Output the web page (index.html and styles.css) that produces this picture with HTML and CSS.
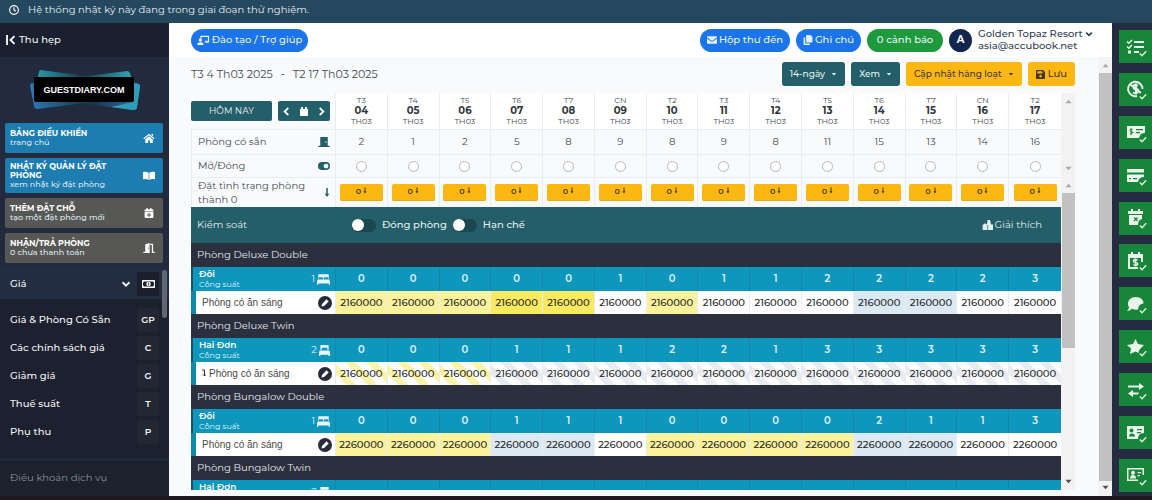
FILE: index.html
```html
<!DOCTYPE html>
<html lang="vi">
<head>
<meta charset="utf-8">
<title>GuestDiary – Nhật ký quản lý đặt phòng</title>
<link rel="stylesheet" href="styles.css">
</head>
<body>
<svg class="sprite" aria-hidden="true">
  <symbol id="caret" viewBox="0 0 8 8"><path d="M1 2.500h6L4 6z"/></symbol>
  <symbol id="up" viewBox="0 0 8 8"><path d="M0.500 6h7L4 2z"/></symbol>
  <symbol id="down" viewBox="0 0 8 8"><path d="M0.500 2h7L4 6z"/></symbol>
  <symbol id="chev" viewBox="0 0 10 10"><path d="M1.500 3.200 5 6.700l3.500-3.500" fill="none" stroke="currentColor" stroke-width="2"/></symbol>
  <symbol id="left" viewBox="0 0 10 10"><path d="M7 1 3 5l4 4" fill="none" stroke="currentColor" stroke-width="2"/></symbol>
  <symbol id="right" viewBox="0 0 10 10"><path d="M3 1l4 4-4 4" fill="none" stroke="currentColor" stroke-width="2"/></symbol>
  <symbol id="cal" viewBox="0 0 16 16"><path d="M2 3h1V0h3v3h4V0h3v3h1a1 1 0 0 1 1 1v11a1 1 0 0 1-1 1H2a1 1 0 0 1-1-1V4a1 1 0 0 1 1-1z"/></symbol>
  <symbol id="calplus" viewBox="0 0 16 16"><path fill-rule="evenodd" d="M2.500 2H4V0h2v2h4V0h2v2h1.500A1.500 1.500 0 0 1 15 3.500V5H1V3.500A1.500 1.500 0 0 1 2.500 2zM1 6h14v8.500a1.500 1.500 0 0 1-1.500 1.500h-11A1.500 1.500 0 0 1 1 14.500zm6.200 1.500v2.700H4.500v1.600h2.700v2.700h1.600v-2.700h2.700v-1.600H8.800V7.500z"/></symbol>
  <symbol id="bed" viewBox="0 0 20 16"><path fill-rule="evenodd" d="M2 0h16v7h-1V4.500h-6V7H9V4.500H3V7H2zM1 8h18l1 3v5h-2v-2H2v2H0v-5z"/></symbol>
  <symbol id="bed1" viewBox="0 0 16 16"><path fill-rule="evenodd" d="M2 0h12v7h-2V4H4v3H2zM1 8h14l1 3v5h-2v-2H2v2H0v-5z"/></symbol>
  <symbol id="pen" viewBox="0 0 16 16"><circle cx="8" cy="8" r="8" fill="#272b3a"/><path d="M4 12l.6-3L9.800 3.800l2.400 2.400L7 11.400z" fill="#fff"/></symbol>
  <symbol id="arrow" viewBox="0 0 8 12"><path d="M3 0h2v7.500h2L4 12 1 7.500h2z"/></symbol>
  <symbol id="check" viewBox="0 0 10 8"><path d="M1 4l2.800 2.800L9 1.200" fill="none" stroke="#d9f0dc" stroke-width="1.800"/></symbol>
</svg>

<div class="banner">
  <svg width="10" height="10" viewBox="0 0 16 16"><circle cx="8" cy="8" r="7" fill="none" stroke="#fff" stroke-width="1.800"/><path d="M8 3.500V8l3 2" fill="none" stroke="#fff" stroke-width="1.800"/></svg>
  <span>Hệ thống nhật ký này đang trong giai đoạn thử nghiệm.</span>
</div>

<div class="app">
  <aside class="side">
    <button class="collapse"><svg width="10" height="10" viewBox="0 0 10 10"><path d="M1 0v10M8.500 1.200 4.500 5l4 3.800" fill="none" stroke="#fff" stroke-width="1.800"/></svg>Thu hẹp</button>
    <div class="logo">
      <svg viewBox="0 0 112 42" width="112" height="42">
        <defs>
          <linearGradient id="g1"><stop offset="0" stop-color="#299aa8"/><stop offset=".5" stop-color="#17304a"/><stop offset="1" stop-color="#2b6fa8"/></linearGradient>
          <linearGradient id="g2"><stop offset="0" stop-color="#2c78b4"/><stop offset=".5" stop-color="#17404f"/><stop offset="1" stop-color="#31a4b4"/></linearGradient>
        </defs>
        <path d="M12 1q-2 0-2 2L7 15l3 14 94 12q4 0 4-3l3-20q1-3-3-4z" fill="url(#g1)"/>
        <path d="M98 2q2 0 3 2l3 10-1 14-94 12q-4 0-4-3L1 17q0-3 3-3z" fill="url(#g2)"/>
        <path d="M104 14l4 1q3 0 3 3l-3 20q0 3-4 3l-22-3 22-5z" fill="#2f9db6"/>
        <rect x="5" y="8" width="100" height="25" rx="2" fill="#000"/>
        <text x="55" y="24" text-anchor="middle" class="logo-text">GUESTDIARY.COM</text>
      </svg>
    </div>
    <nav class="tiles">
      <a class="tile blue" href="#"><span><b>BẢNG ĐIỀU KHIỂN</b>trang chủ</span><svg width="12" height="10" viewBox="0 0 18 16"><path d="M9 1l9 7.500-1.200 1.300L9 3.400 1.200 9.800 0 8.500zM13 1.500h2.500V5L13 3zM9 5l6 5v6h-4.500v-4h-3v4H3v-6z"/></svg></a>
      <a class="tile blue" href="#"><span><b>NHẬT KÝ QUẢN LÝ ĐẶT PHÒNG</b>xem nhật ký đặt phòng</span><svg width="12" height="10" viewBox="0 0 18 14"><path d="M0 1q5-1 8.500 1v11Q5 11 0 12zM18 1q-5-1-8.500 1v11q3.500-2 8.500-1z"/></svg></a>
      <a class="tile grey" href="#"><span><b>THÊM ĐẶT CHỖ</b>tạo một đặt phòng mới</span><svg width="12" height="10"><use href="#calplus"/></svg></a>
      <a class="tile grey" href="#"><span><b>NHẬN/TRẢ PHÒNG</b>0 chưa thanh toán</span><svg width="12" height="10" viewBox="0 0 18 16"><path fill-rule="evenodd" d="M3 2l7-2v16H0v-2h3zm4.500 5v2h1.200V7zM11 1h4.500v13H18v2h-4.500V3H11z"/></svg></a>
    </nav>
    <div class="menu">
      <button class="menu-head"><span>Giá</span><svg width="10" height="10"><use href="#chev"/></svg><i><svg width="13" height="8" viewBox="0 0 26 16"><path fill-rule="evenodd" d="M0 0h26v16H0zM4 3q0 2-2 2v6q2 0 2 2h18q0-2 2-2V5q-2 0-2-2z"/><circle cx="13" cy="8" r="4.500"/><path d="M13 5v6" stroke="#1b1e2b" stroke-width="1.500"/></svg></i></button>
      <ul>
        <li><a href="#">Giá &amp; Phòng Có Sẵn</a><i>GP</i></li>
        <li><a href="#">Các chính sách giá</a><i>C</i></li>
        <li><a href="#">Giảm giá</a><i>G</i></li>
        <li><a href="#">Thuế suất</a><i>T</i></li>
        <li><a href="#">Phụ thu</a><i>P</i></li>
      </ul>
      <div class="side-thumb"></div>
    </div>
    <a class="terms" href="#">Điều khoản dịch vụ</a>
  </aside>

  <main class="main">
    <header class="top">
      <button class="pill help"><svg width="13" height="10" viewBox="0 0 20 16"><path d="M5 1h14v11h-7v-2h5V3H7v2H5z"/><circle cx="5" cy="8" r="2.700"/><path d="M0 16q0-4.500 4-4.500h2q4 0 4 4.500zM12 9h4v4z"/></svg>Đào tạo / Trợ giúp</button>
      <span class="grow"></span>
      <button class="pill inbox"><svg width="10" height="8" viewBox="0 0 16 12"><path d="M0 1q0-1 1-1h14q1 0 1 1v1L8 7.500 0 2zM0 4l8 5.200L16 4v7q0 1-1 1H1q-1 0-1-1z"/></svg>Hộp thư đến</button>
      <button class="pill notes"><svg width="10" height="10" viewBox="0 0 16 16"><path d="M6 0h6l3 3v9H5V1q0-1 1-1zM1 4h2.500v9.500H11V16H2q-1 0-1-1z"/></svg>Ghi chú</button>
      <button class="pill alerts">0 cảnh báo</button>
      <span class="avatar">A</span>
      <button class="user"><span>Golden Topaz Resort<br>asia@accubook.net</span><svg width="8" height="8"><use href="#chev"/></svg></button>
    </header>

    <div class="content">
      <div class="page">
        <div class="toolbar">
          <span class="range">T3 4 Th03 2025</span><span class="range">-</span><span class="range">T2 17 Th03 2025</span>
          <span class="grow"></span>
          <button class="btn teal">14-ngày <svg width="6" height="6"><use href="#caret"/></svg></button>
          <button class="btn teal">Xem <svg width="6" height="6"><use href="#caret"/></svg></button>
          <button class="btn amber">Cập nhật hàng loạt <svg width="6" height="6"><use href="#caret"/></svg></button>
          <button class="btn amber save"><svg width="9" height="9" viewBox="0 0 14 14"><path fill-rule="evenodd" d="M1 0h10l3 3v10q0 1-1 1H1q-1 0-1-1V1q0-1 1-1zm1 2v3.500h8V2zm5 5.500a2 2 0 1 0 .01 0z"/></svg>Lưu</button>
        </div>

        <div class="pane head-pane">
          <table class="grid">
            <colgroup><col class="label-col"><col span="14"></colgroup>
            <tr class="dates">
              <td><div class="nav"><button class="today">HÔM NAY</button><span class="pager"><button aria-label="Trước"><svg width="9" height="9"><use href="#left"/></svg></button><button aria-label="Lịch"><svg width="10" height="9"><use href="#cal"/></svg></button><button aria-label="Sau"><svg width="9" height="9"><use href="#right"/></svg></button></span></div></td>
              <th>T3<b>04</b>TH03</th><th>T4<b>05</b>TH03</th><th>T5<b>06</b>TH03</th><th>T6<b>07</b>TH03</th><th>T7<b>08</b>TH03</th><th>CN<b>09</b>TH03</th><th>T2<b>10</b>TH03</th><th>T3<b>11</b>TH03</th><th>T4<b>12</b>TH03</th><th>T5<b>13</b>TH03</th><th>T6<b>14</b>TH03</th><th>T7<b>15</b>TH03</th><th>CN<b>16</b>TH03</th><th>T2<b>17</b>TH03</th>
            </tr>
            <tr class="avail">
              <th><div class="lab">Phòng có sẵn<svg width="12" height="10" viewBox="0 0 18 16"><path fill-rule="evenodd" d="M3 0h12v14h3v2H0v-2h3zm8 7v2h2V7z"/></svg></div></th>
              <td>2</td><td>1</td><td>2</td><td>5</td><td>8</td><td>9</td><td>8</td><td>9</td><td>8</td><td>11</td><td>15</td><td>13</td><td>14</td><td>16</td>
            </tr>
            <tr class="open">
              <th><div class="lab">Mở/Đóng<svg width="12" height="8" viewBox="0 0 18 12"><path fill-rule="evenodd" d="M6 0h6a6 6 0 0 1 0 12H6A6 6 0 0 1 6 0zm6 2.500a3.500 3.500 0 1 0 .01 0z"/></svg></div></th>
              <td><input type="radio" aria-label="04"></td><td><input type="radio" aria-label="05"></td><td><input type="radio" aria-label="06"></td><td><input type="radio" aria-label="07"></td><td><input type="radio" aria-label="08"></td><td><input type="radio" aria-label="09"></td><td><input type="radio" aria-label="10"></td><td><input type="radio" aria-label="11"></td><td><input type="radio" aria-label="12"></td><td><input type="radio" aria-label="13"></td><td><input type="radio" aria-label="14"></td><td><input type="radio" aria-label="15"></td><td><input type="radio" aria-label="16"></td><td><input type="radio" aria-label="17"></td>
            </tr>
          </table>
          <div class="scroll"><svg width="7" height="7"><use href="#up"/></svg><svg width="7" height="7"><use href="#down"/></svg></div>
        </div>

        <div class="pane body-pane">
          <div class="rows">
          <table class="grid">
            <colgroup><col class="label-col"><col span="14"></colgroup>
            <tr class="zero">
              <th><div class="lab">Đặt tình trạng phòng thành 0<svg width="6" height="9"><use href="#arrow"/></svg></div></th>
              <td><button>0<svg width="4" height="7"><use href="#arrow"/></svg></button></td><td><button>0<svg width="4" height="7"><use href="#arrow"/></svg></button></td><td><button>0<svg width="4" height="7"><use href="#arrow"/></svg></button></td><td><button>0<svg width="4" height="7"><use href="#arrow"/></svg></button></td><td><button>0<svg width="4" height="7"><use href="#arrow"/></svg></button></td><td><button>0<svg width="4" height="7"><use href="#arrow"/></svg></button></td><td><button>0<svg width="4" height="7"><use href="#arrow"/></svg></button></td><td><button>0<svg width="4" height="7"><use href="#arrow"/></svg></button></td><td><button>0<svg width="4" height="7"><use href="#arrow"/></svg></button></td><td><button>0<svg width="4" height="7"><use href="#arrow"/></svg></button></td><td><button>0<svg width="4" height="7"><use href="#arrow"/></svg></button></td><td><button>0<svg width="4" height="7"><use href="#arrow"/></svg></button></td><td><button>0<svg width="4" height="7"><use href="#arrow"/></svg></button></td><td><button>0<svg width="4" height="7"><use href="#arrow"/></svg></button></td>
            </tr>
            <tr class="control">
              <th><div class="lab">Kiểm soát</div></th>
              <td colspan="14"><div class="switches">
                <label><input type="checkbox">Đóng phòng</label><label><input type="checkbox">Hạn chế</label>
                <span class="grow"></span>
                <button class="legend"><svg width="11" height="10" viewBox="0 0 18 16"><path d="M9 0h4l2 7h3v9h-8V8H8zM1 8l4-3 4 3v8H1z"/></svg>Giải thích</button>
              </div></td>
            </tr>
            <tr class="room"><th colspan="15">Phòng Deluxe Double</th></tr>
            <tr class="cap">
              <th><div class="lab"><span><b>Đôi</b>Công suất</span><em>1<svg width="13" height="11"><use href="#bed"/></svg></em></div></th>
              <td>0</td><td>0</td><td>0</td><td>0</td><td>0</td><td>1</td><td>0</td><td>1</td><td>1</td><td>2</td><td>2</td><td>2</td><td>2</td><td>3</td>
            </tr>
            <tr class="price">
              <th><div class="lab">Phòng có ăn sáng<svg width="14" height="14"><use href="#pen"/></svg></div></th>
              <td class="y1">2160000</td><td class="y1">2160000</td><td class="y1">2160000</td><td class="y2">2160000</td><td class="y2">2160000</td><td>2160000</td><td class="y1">2160000</td><td>2160000</td><td>2160000</td><td>2160000</td><td class="b1">2160000</td><td class="b1">2160000</td><td>2160000</td><td>2160000</td>
            </tr>
            <tr class="room"><th colspan="15">Phòng Deluxe Twin</th></tr>
            <tr class="cap">
              <th><div class="lab"><span><b>Hai Đơn</b>Công suất</span><em>2<svg width="11" height="11"><use href="#bed1"/></svg></em></div></th>
              <td>0</td><td>0</td><td>0</td><td>1</td><td>1</td><td>1</td><td>2</td><td>2</td><td>1</td><td>3</td><td>3</td><td>3</td><td>3</td><td>3</td>
            </tr>
            <tr class="price">
              <th><div class="lab"><span><svg class="turn" width="4" height="8" viewBox="0 0 4 8"><path d="M0 1h2.500v6M1 5.500 2.500 7 4 5.500" fill="none" stroke="#333" stroke-width="1"/></svg>Phòng có ăn sáng</span><svg width="14" height="14"><use href="#pen"/></svg></div></th>
              <td class="ys">2160000</td><td class="ys">2160000</td><td class="ys">2160000</td><td class="bs">2160000</td><td class="bs">2160000</td><td class="bs">2160000</td><td class="bs">2160000</td><td class="bs">2160000</td><td class="bs">2160000</td><td class="bs">2160000</td><td class="bs">2160000</td><td class="bs">2160000</td><td class="bs">2160000</td><td class="bs">2160000</td>
            </tr>
            <tr class="room"><th colspan="15">Phòng Bungalow Double</th></tr>
            <tr class="cap">
              <th><div class="lab"><span><b>Đôi</b>Công suất</span><em>1<svg width="13" height="11"><use href="#bed"/></svg></em></div></th>
              <td>0</td><td>0</td><td>0</td><td>1</td><td>1</td><td>1</td><td>0</td><td>0</td><td>0</td><td>0</td><td>2</td><td>1</td><td>1</td><td>3</td>
            </tr>
            <tr class="price">
              <th><div class="lab">Phòng có ăn sáng<svg width="14" height="14"><use href="#pen"/></svg></div></th>
              <td class="y1">2260000</td><td class="y1">2260000</td><td class="y1">2260000</td><td class="b1">2260000</td><td class="b1">2260000</td><td>2260000</td><td class="y1">2260000</td><td class="y1">2260000</td><td class="y1">2260000</td><td class="y1">2260000</td><td class="b1">2260000</td><td class="b1">2260000</td><td>2260000</td><td>2260000</td>
            </tr>
            <tr class="room"><th colspan="15">Phòng Bungalow Twin</th></tr>
            <tr class="cap">
              <th><div class="lab"><span><b>Hai Đơn</b>Công suất</span><em>2<svg width="11" height="11"><use href="#bed1"/></svg></em></div></th>
              <td></td><td></td><td></td><td></td><td></td><td></td><td></td><td></td><td></td><td></td><td></td><td></td><td></td><td></td>
            </tr>
          </table>
          </div>
          <div class="scroll"><svg width="7" height="7"><use href="#up"/></svg><div class="thumb half"></div><svg class="dark" width="7" height="7"><use href="#down"/></svg></div>
        </div>
      </div>
      <div class="scroll outer"><svg width="7" height="7"><use href="#up"/></svg><div class="thumb most"></div><svg class="dark" width="7" height="7"><use href="#down"/></svg></div>
    </div>
  </main>

  <aside class="rail">
    <button aria-label="Danh sách"><svg viewBox="0 0 20 18"><path d="M8 3h10v2H8zM8 8h10v2H8zM8 13h5v2H8zM2 12.500h3v3H2z"/><path d="M1 3.500l1.800 1.800L6 2M1 8.500l1.800 1.800L6 7" fill="none" stroke="#e9f7ea" stroke-width="1.500"/></svg><svg class="tick"><use href="#check"/></svg></button>
    <button aria-label="Giá"><svg viewBox="0 0 20 18"><path d="M16.500 9A7.200 7.200 0 1 0 11 16M4 4l11 9M12 5.500q-4-2-4.500 1t3 2.500q3 1 1.500 3t-5 .5M10 3.500v11" fill="none" stroke="#e9f7ea" stroke-width="2"/></svg><svg class="tick"><use href="#check"/></svg></button>
    <button aria-label="Séc"><svg viewBox="0 0 20 18"><path fill-rule="evenodd" d="M1 3h18v7q-5 0-6 5H1zm9 3v1.300h7V6zm0 3v1.300h4V9z"/><path d="M6.500 6.500Q4 5.500 4 7.200T6.500 9 4 10.800M5.200 5v7" fill="none" stroke="#2a7d3a"/></svg><svg class="tick"><use href="#check"/></svg></button>
    <button aria-label="Thẻ"><svg viewBox="0 0 20 18"><path fill-rule="evenodd" d="M1 3h17v3.500H1zM1 8.500h17V11q-5 0-6 5H1zM3 12v1.300h2V12zm4 0v1.300h4V12z"/></svg><svg class="tick"><use href="#check"/></svg></button>
    <button aria-label="Hủy đặt"><svg viewBox="0 0 20 18"><path d="M2 2h3V0h2v2h5V0h2v2h3v3H2zM3 6h13v4q-4 1-4 6H3z"/><path d="M8 8.500l3.500 3.500M11.500 8.500 8 12" stroke="#2a7d3a" stroke-width="1.300"/></svg><svg class="tick"><use href="#check"/></svg></button>
    <button aria-label="Lịch giá"><svg viewBox="0 0 20 18"><path fill-rule="evenodd" d="M2 2h3V0h2v2h5V0h2v2h3v8h-2V6H4v9h8v2H2z"/><path d="M11.500 8Q8 6.500 7.500 8.500t2 2q3 .5 2 2t-4 .5M9.500 6.500v8" fill="none" stroke="#e9f7ea" stroke-width="1.400"/></svg><svg class="tick"><use href="#check"/></svg></button>
    <button aria-label="Tin nhắn"><svg viewBox="0 0 20 18"><path d="M10 2q7 0 7.500 6.500-5 .5-5.500 6-3 .5-6-.7Q4 16 1 16q2-2 2-4-1.500-2-1-4.500Q3.500 2 10 2z"/></svg><svg class="tick"><use href="#check"/></svg></button>
    <button aria-label="Đánh giá"><svg viewBox="0 0 20 18"><path d="M9.500 1l2.500 5 6 1-3.500 3.500q-2 1.500-2 4.500l-3-1.500L4 16l1-5.500L1 7l6-1z"/></svg><svg class="tick"><use href="#check"/></svg></button>
    <button aria-label="Chuyển"><svg viewBox="0 0 20 18"><path d="M2 4.500h11V2l5 3.500L13 9V6.500H2zM13 11.500H7V9l-5 3.500L7 16v-2.500h5z"/></svg><svg class="tick"><use href="#check"/></svg></button>
    <button aria-label="Khách"><svg viewBox="0 0 20 18"><path fill-rule="evenodd" d="M1 2h17v7q-6 0-6 6H1zm4.500 2.500a2 2 0 1 0 .01 0zM3 12.500h6q0-3-3-3t-3 3zM11 5v1.300h5V5zm0 3v1.300h4V8z"/></svg><svg class="tick"><use href="#check"/></svg></button>
    <button aria-label="Danh bạ"><svg viewBox="0 0 20 18"><path fill-rule="evenodd" d="M1 2h17v7h-1.500V3.500h-14v10H12V15H1z"/><circle cx="7" cy="6.700" r="2"/><path d="M4 12.500q0-3.500 3-3.500t3 3.500zM11.500 6H15v1.300h-3.500zM11.500 9H14v1.300h-2.500z"/></svg><svg class="tick"><use href="#check"/></svg></button>
  </aside>
</div>
</body>
</html>
```
FILE: styles.css
```css
* { box-sizing: border-box; }
body {
  margin: 0; height: 100vh; overflow: hidden;
  display: flex; flex-direction: column;
  border-bottom: 4px solid #1c1a1c;
  background: #252c42;
  font: 500 10px/14px Montserrat, Inter, "Noto Sans", sans-serif;
  color: #454b55;
}
button { font: inherit; color: inherit; border: 0; background: none; padding: 0; margin: 0; cursor: pointer; }
a { color: inherit; text-decoration: none; }
svg { fill: currentColor; flex: none; display: block; }
em, i { font-style: normal; }
input { margin: 0; }
.sprite { position: absolute; width: 0; height: 0; }
.grow { flex: 1; }

.banner { flex: none; height: 23px; padding: 0 9px 3px; display: flex; align-items: center; gap: 9px; background: #24495f; color: #e6edf2; font-weight: 400; }
.app { flex: 1; min-height: 0; display: flex; }

/* sidebar */
.side { flex: none; width: 169px; background: #222a3d; color: #f1f3f6; display: flex; flex-direction: column; }
.collapse { height: 34px; flex: none; padding: 0 6px; display: flex; align-items: center; gap: 3px; background: #1a202e; }
.logo { flex: none; height: 66px; padding-top: 12px; display: flex; justify-content: center; }
.logo-text { font: bold 9px "Liberation Sans", Arial, sans-serif; fill: #fff; }
.tiles { flex: none; padding: 0 6px 5px 5px; display: flex; flex-direction: column; gap: 5px; }
.tile { min-height: 30px; padding: 1px 8px 1px 5px; display: flex; align-items: center; justify-content: space-between; border-radius: 2px; font-size: 8px; line-height: 9px; color: #dde9f0; }
.tile span { width: 112px; }
.tile:nth-child(2) { min-height: 35px; }
.tile b { display: block; color: #fff; font-weight: 700; }
.tile svg { color: #fff; }
.blue { background: #1d7cb0; }
.grey { background: #575856; }
.menu { flex: 1; min-height: 0; background: #1d202e; position: relative; }
.menu-head { width: 100%; height: 31px; padding: 0 10px; display: flex; align-items: center; background: #222d41; text-align: left; }
.menu-head span { flex: 1; }
.menu i { width: 22px; height: 24px; margin-left: 6px; display: flex; align-items: center; justify-content: center; background: #1b1e2b; border-radius: 3px; font-size: 9px; font-weight: 600; }
.menu ul { list-style: none; margin: 0; padding: 7px 10px 0; }
.menu li { height: 28px; display: flex; align-items: center; justify-content: space-between; }
.menu li i { background: #232633; }
.side-thumb { position: absolute; right: 2px; top: 2px; width: 5px; height: 48px; border-radius: 3px; background: #626673; }
.terms { flex: none; height: 38px; padding: 0 10px 2px; border-top: 3px solid #20283c; display: flex; align-items: center; background: #1b212d; color: #8a8f99; font-weight: 400; }

/* header */
.main { flex: 1; min-width: 0; display: flex; flex-direction: column; background: #f9fafc; }
.top { flex: none; height: 34px; padding: 0 20px 0 22px; display: flex; align-items: center; gap: 6px; background: #fff; }
.pill { height: 23px; border-radius: 12px; display: flex; align-items: center; justify-content: center; gap: 2px; color: #e9f3ff; background: #1b74ea; }
.help { width: 117px; }
.inbox { width: 90px; }
.notes { width: 65px; }
.alerts { width: 76px; background: #1e9a3d; }
.avatar { width: 23px; height: 23px; border-radius: 50%; background: #10264d; color: #fff; font-weight: 700; display: flex; align-items: center; justify-content: center; }
.user { display: flex; gap: 2px; text-align: left; line-height: 12px; color: #303c52; width: 114px; white-space: nowrap; }
.user svg { margin-top: 2px; }

.content { flex: 1; min-height: 0; display: flex; }
.page { flex: 1; min-width: 0; padding: 5px 23px 6px 22px; display: flex; flex-direction: column; }
.toolbar { flex: none; display: flex; align-items: center; gap: 6px; margin-bottom: 7px; }
.range { margin-right: 2px; font-size: 11px; font-weight: 400; }
.btn { height: 24px; padding: 0 8px; border-radius: 3px; display: flex; align-items: center; gap: 6px; font-size: 9px; }
.teal { background: #245e68; color: #e6f0f1; }
.amber { background: #fcb712; color: #41391e; }
.save { gap: 3px; font-size: 10px; }

/* scrollbars */
.scroll { flex: none; width: 14px; background: #f3f3f4; display: flex; flex-direction: column; align-items: center; padding: 5px 0; color: #a9a9a9; }
.scroll > :last-child { margin-top: auto; }
.scroll .dark { color: #505050; }
.thumb { width: 13px; margin-top: 4px; background: #c1c1c1; }
.half { height: 51%; }
.most { height: 95%; }

/* grid */
.pane { display: flex; min-height: 0; }
.head-pane { flex: none; }
.body-pane { flex: 1; }
.rows { flex: 1; min-width: 0; overflow: hidden; }
.grid { width: 100%; border-collapse: separate; border-spacing: 0; table-layout: fixed; font-weight: 400; }
.head-pane .grid { flex: 1; }
.label-col { width: 145px; }
.grid th, .grid td { padding: 0; font-weight: inherit; text-align: center; border-right: 1px solid #e9ecf0; }
.grid tr > :last-child { border-right: 0; }
.lab { display: flex; align-items: center; justify-content: space-between; text-align: left; padding: 0 5px 0 6px; }
.lab svg { color: #245e68; }
.dates { height: 36px; }
.grid .dates th { font-size: 8px; line-height: 9px; background: #fff; }
.dates b { display: block; font-size: 10px; line-height: 12px; font-weight: 700; color: #30343b; }
.nav { display: flex; gap: 6px; padding-right: 5px; }
.today { flex: 1; height: 20px; font-size: 9px; border-radius: 2px; background: #245e68; color: #e6f0f1; }
.pager { width: 52px; height: 20px; border-radius: 2px; display: flex; align-items: center; justify-content: space-around; background: #245e68; color: #fff; }
.avail { height: 25px; }
.open { height: 23px; }
.avail > *, .open > *, .zero > * { border-top: 1px solid #e9ecf0; }
.avail > th, .open > th, .zero > th { border-left: 1px solid #e9ecf0; }
.open input { appearance: none; display: block; width: 11px; height: 11px; margin: 0 auto; border: 1px solid #b4b7bb; border-radius: 50%; background: #fff; }
.zero { height: 30px; }
.zero .lab { line-height: 14px; }
.zero button { width: 43px; height: 17px; padding-bottom: 3px; border-radius: 2px; background: #fcb712; color: #41391e; font-size: 8px; line-height: 12px; font-weight: 600; box-shadow: inset 0 -1px #e9a90f; }
.zero button svg { display: inline-block; margin-left: 2px; }
.control { height: 36px; background: #245e68; color: #e2edee; }
.grid .control > * { border: 0; }
.switches { display: flex; align-items: center; padding: 0 19px 0 16px; gap: 6px; }
.switches label { display: flex; align-items: center; gap: 6px; font-weight: 500; }
.switches input { appearance: none; width: 24px; height: 13px; border-radius: 7px; background: #1b4751; }
.switches input::before { content: ""; display: block; width: 12px; height: 12px; border-radius: 50%; background: #fff; }
.legend { display: flex; align-items: center; gap: 2px; }
.room { height: 24px; background: #2b2f3e; color: #e4e6ea; }
.grid .room th { text-align: left; padding-left: 6px; }
.cap { height: 24px; background: #0f96bd; color: #dff3f8; }
.grid .cap > * { border-right-color: #1586aa; }
.grid .cap td { font-weight: 600; }
.grid .cap th { border-left: 2px solid #1a5265; }
.cap .lab { line-height: 10px; height: 24px; font-size: 8px; }
.cap b { display: block; font-weight: 600; font-size: 9px; color: #fff; }
.cap em { display: flex; align-items: center; gap: 2px; font-size: 10px; }
.cap svg { color: #e9f7fa; }
.price { height: 23px; background: #fff; color: #24262b; }
.grid .price td { font-weight: 500; }
.grid .price th { border-left: 5px solid #0f89ab; color: #4a4a4a; }
.price .lab { padding-right: 3px; font-family: "Liberation Sans", Arial, sans-serif; }
.price .turn { display: inline-block; margin-right: 3px; }
.y1 { background: #fcf29b; }
.y2 { background: #fbe95f; }
.b1 { background: #dce9f2; }
.ys { background: repeating-linear-gradient(45deg, #fff 0 7px, #fbf4a8 8px 14px, #fff 15px); }
.bs { background: repeating-linear-gradient(45deg, #fff 0 7px, #e8ebf0 8px 14px, #fff 15px); }

/* right rail */
.rail { flex: none; width: 40px; padding: 7px 0 4px 7px; display: flex; flex-direction: column; justify-content: space-between; background: #252c42; }
.rail button { height: 33px; position: relative; background: #17853a; color: #e9f7ea; }
.rail button > svg { width: 20px; height: 18px; margin: 0 auto; }
.rail button > .tick { position: absolute; right: 5px; bottom: 6px; width: 8px; height: 7px; }
```
